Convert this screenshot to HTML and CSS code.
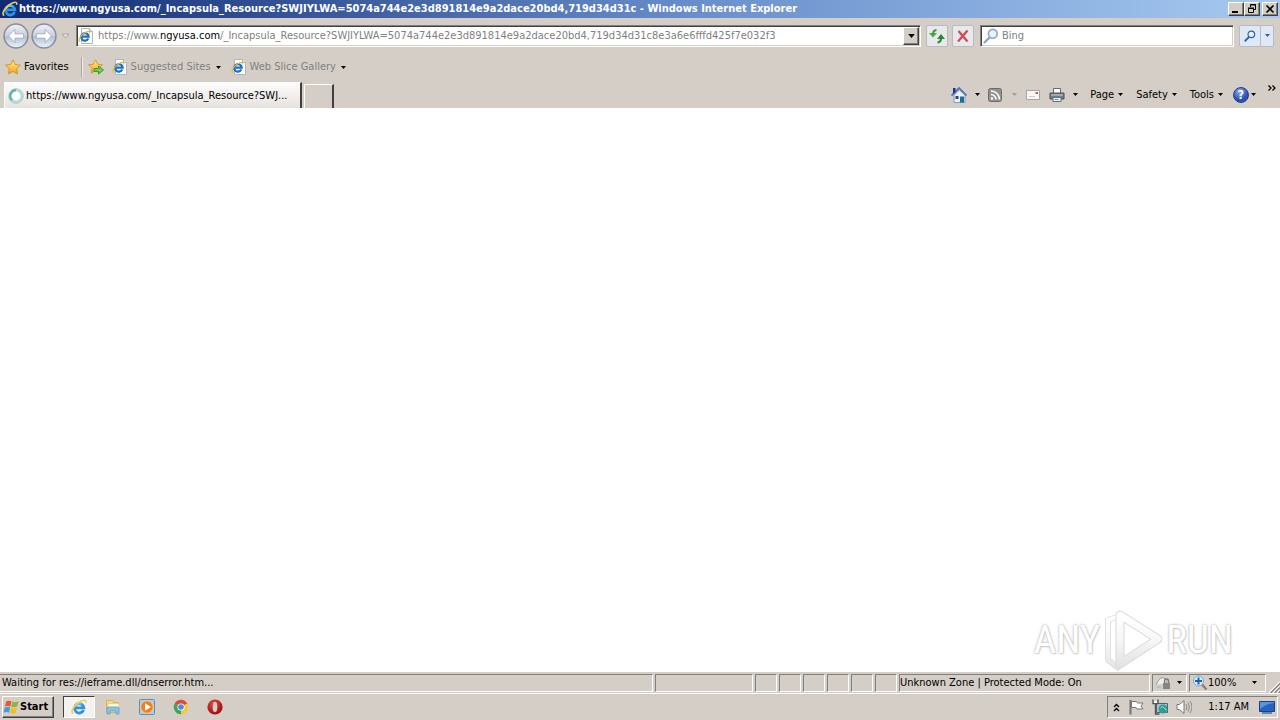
FILE: index.html
```html
<!DOCTYPE html>
<html lang="en">
<head>
<meta charset="utf-8">
<title>Windows Internet Explorer</title>
<link rel="stylesheet" href="styles.css">
</head>
<body>
<svg class="defs" aria-hidden="true">
  <defs>
    <linearGradient id="gold" x1="0" y1="0" x2="0" y2="1"><stop offset="0" stop-color="#fff08e"/><stop offset="1" stop-color="#f5a31a"/></linearGradient>
    <linearGradient id="orb" x1="0" y1="0" x2="0" y2="1"><stop offset="0" stop-color="#eef1f7"/><stop offset=".5" stop-color="#c8d0de"/><stop offset=".52" stop-color="#b3c0d4"/><stop offset="1" stop-color="#eaf5fc"/></linearGradient>
    <radialGradient id="red" cx=".4" cy=".3" r=".8"><stop offset="0" stop-color="#e8483e"/><stop offset="1" stop-color="#8c0808"/></radialGradient>
    <linearGradient id="mark" x1="0" y1="0" x2="0" y2="1"><stop offset="0" stop-color="#fff"/><stop offset=".5" stop-color="#f7f7f7"/><stop offset="1" stop-color="#e4e4e4"/></linearGradient>
  </defs>
  <symbol id="ie" viewBox="0 0 16 16">
    <path d="M12.600 11A4.700 4.700 0 1 1 12.900 8.800H4.500" fill="none" stroke="#2e93e6" stroke-width="2.800"/>
    <path d="M4 7.500Q6 4 10.500 5" fill="none" stroke="#a5defc" stroke-width="1"/>
    <path d="M2.300 14.500C-.8 13.500 2 7.500 7 4S15.500.300 14.700 3.800" fill="none" stroke="#f6cd4c" stroke-width="1.600"/>
  </symbol>
  <symbol id="iepage" viewBox="0 0 16 16">
    <path d="M3.500.500h8l3 3v12h-11z" fill="#fff" stroke="#aab6c3"/>
    <path d="M11.500.500v3h3" fill="#dde8f2" stroke="#aab6c3"/>
    <path d="M10.300 10.600A3.800 3.800 0 1 1 10.700 8.600H4" fill="none" stroke="#1c6fc4" stroke-width="2.200"/>
    <path d="M2 13.600C-.5 12.500 2.500 7.500 6 5.200S12.500 2.500 11.500 5.500" fill="none" stroke="#e8b93a" stroke-width="1.100"/>
  </symbol>
  <symbol id="star" viewBox="0 0 16 16">
    <path d="M8 .8l2.200 4.700 5.200.600-3.800 3.600 1 5.300L8 12.400 3.400 15l1-5.300L.6 6.100l5.200-.6z" fill="url(#gold)" stroke="#d68f1e" stroke-width=".9"/>
  </symbol>
  <symbol id="down" viewBox="0 0 5 3"><path d="M0 0h5L2.500 3z" fill="currentColor"/></symbol>
  <symbol id="lens" viewBox="0 0 16 16">
    <path d="M6.500 9.500L1 15" stroke="currentColor" stroke-width="2.400"/>
    <circle cx="9.800" cy="5.800" r="4.400" fill="#e8f3fd" stroke="currentColor" stroke-width="1.600"/>
    <path d="M7.500 5.500a2.500 2.500 0 0 1 2-2" fill="none" stroke="#fff" stroke-width="1.200"/>
  </symbol>
</svg>

<header class="titlebar">
  <svg class="ico"><use href="#ie"/></svg>
  <h1 class="caption">https://www.ngyusa.com/_Incapsula_Resource?SWJIYLWA=5074a744e2e3d891814e9a2dace20bd4,719d34d31c - Windows Internet Explorer</h1>
  <div class="winbtns">
    <button class="winbtn" aria-label="Minimize"><svg viewBox="0 0 12 10"><path d="M2 8h6" stroke="#000" stroke-width="2"/></svg></button>
    <button class="winbtn" aria-label="Restore"><svg viewBox="0 0 12 10"><path d="M4.500 3V.500h5v5H8M4 1h6M2.500 4.500h5v4h-5zM2 4h6" fill="none" stroke="#000"/></svg></button>
    <button class="winbtn close" aria-label="Close"><svg viewBox="0 0 12 10"><path d="M2.500 1.500l7 7M9.500 1.500l-7 7" stroke="#000" stroke-width="1.700"/></svg></button>
  </div>
</header>

<nav class="navrow" aria-label="Navigation">
  <div class="travel">
    <button class="orb" aria-label="Back"><svg viewBox="0 0 24 24"><circle cx="12" cy="12" r="11" fill="url(#orb)" stroke="#858d99" stroke-width="1.400"/><path d="M5 12l6-6v4h8v4h-8v4z" fill="#fff" stroke="#93a2b8" stroke-width=".7"/></svg></button>
    <button class="orb" aria-label="Forward"><svg viewBox="0 0 24 24"><circle cx="12" cy="12" r="11" fill="url(#orb)" stroke="#858d99" stroke-width="1.400"/><path d="M19 12l-6-6v4H5v4h8v4z" fill="#fff" stroke="#93a2b8" stroke-width=".7"/></svg></button>
    <button class="plain recent" aria-label="Recent pages"><svg viewBox="0 0 9 6"><path d="M1 1h7L4.500 5z" fill="#e7e4df" stroke="#aaa69f"/></svg></button>
  </div>
  <div class="address field">
    <svg class="ico"><use href="#iepage"/></svg>
    <div class="url" role="textbox" aria-label="Address" contenteditable="true" spellcheck="false">https://www.<span class="host">ngyusa.com</span>/_Incapsula_Resource?SWJIYLWA=5074a744e2e3d891814e9a2dace20bd4,719d34d31c8e3a6e6fffd425f7e032f3</div>
    <button class="drop" aria-label="Show address list"><svg class="arrow big"><use href="#down"/></svg></button>
  </div>
  <button class="tool" aria-label="Refresh"><svg viewBox="0 0 16 16"><path d="M7.500 2Q4 2.500 4 6" fill="none" stroke="#3c9a3c" stroke-width="2"/><path d="M0 5h8L4 9.500z" fill="#47a447"/><path d="M8.500 14.500Q12 14 12 10.500" fill="none" stroke="#2c8430" stroke-width="2"/><path d="M8 11h8l-4-5z" fill="#2c8430"/></svg></button>
  <button class="tool stop" aria-label="Stop"><svg viewBox="0 0 16 16"><path d="M3.500 3l9 10.500M12.500 2.500L3 13.500" stroke="#d24b50" stroke-width="2.300"/></svg></button>
  <div class="search field">
    <svg class="ico lens"><use href="#lens"/></svg>
    <input class="query" type="text" placeholder="Bing" aria-label="Search Bing">
  </div>
  <div class="split">
    <button class="tool" aria-label="Search"><svg class="small"><use href="#lens"/></svg></button>
    <button class="tool slim" aria-label="Search options"><svg class="arrow"><use href="#down"/></svg></button>
  </div>
</nav>

<nav class="favrow" aria-label="Favorites bar">
  <button class="plain favs"><svg class="ico"><use href="#star"/></svg>Favorites</button>
  <button class="plain add" aria-label="Add to Favorites bar"><svg class="ico" viewBox="0 0 16 16"><use href="#star" width="15" height="15"/><path d="M6 9.500h4.500V7L15.500 11l-5 4v-2.500H6z" fill="#6fcf48" stroke="#2f8a22" stroke-width=".8"/></svg></button>
  <button class="plain dim"><svg class="ico"><use href="#iepage"/></svg>Suggested Sites<svg class="arrow"><use href="#down"/></svg></button>
  <button class="plain dim"><svg class="ico"><use href="#iepage"/></svg>Web Slice Gallery<svg class="arrow"><use href="#down"/></svg></button>
</nav>

<div class="tabrow">
  <button class="tab"><svg class="ico" viewBox="0 0 16 16"><circle cx="8" cy="8" r="5.800" fill="#fff" stroke="#b8dedd" stroke-width="2.800"/><path d="M8 2.200A5.800 5.800 0 0 0 4 12.200" fill="none" stroke="#5fb3aa" stroke-width="2.200"/><circle cx="8" cy="8" r="7.300" fill="none" stroke="#8fb5b5" stroke-width=".6"/></svg><span class="tabtext">https://www.ngyusa.com/_Incapsula_Resource?SWJ...</span></button>
  <button class="newtab" aria-label="New Tab"></button>
  <div class="commands">
    <button class="plain home" aria-label="Home"><svg class="ico" viewBox="0 0 16 16"><path d="M3 8v7.500h11V8L8.500 3z" fill="#eaf3fc" stroke="#7e9bc4"/><path d="M.5 8.500L8 1l7.500 7.500" fill="none" stroke="#5579b5" stroke-width="1.800"/><path d="M2 1h2.500v4L2 7z" fill="#20308c"/><path d="M9 9.500h4v6H9z" fill="#1f6d96"/><path d="M4.500 9h3v3h-3z" fill="#25456e"/></svg><svg class="arrow"><use href="#down"/></svg></button>
    <button class="plain feed" aria-label="Feeds"><svg class="ico" viewBox="0 0 16 16"><rect x="1.500" y="1.500" width="13" height="13" rx="2" fill="#949290" stroke="#6d6b69"/><circle cx="5" cy="11.500" r="1.300" fill="#fff"/><path d="M4 7.500a5 5 0 0 1 5 5M4 4a8.500 8.500 0 0 1 8.500 8.500" fill="none" stroke="#fff" stroke-width="1.600"/></svg><svg class="arrow"><use href="#down"/></svg></button>
    <button class="plain mail" aria-label="Read mail"><svg class="ico" viewBox="0 0 16 16"><path d="M1.500 3.500h13v9h-13z" fill="#f8f6f5" stroke="#a5a3a3"/><path d="M10.500 5h2.500v2h-2.500z" fill="#d05656"/><path d="M4 9.500h6" stroke="#ccc"/></svg></button>
    <button class="plain print" aria-label="Print"><svg class="ico" viewBox="0 0 16 16"><path d="M4.500 1.500h7v5h-7z" fill="#fff" stroke="#666b72"/><path d="M1 6h14v6H1z" fill="#777d86" stroke="#4a4e55"/><path d="M2 8h12" stroke="#cfd4da"/><path d="M4 10.500h8v4H4z" fill="#eef6fb" stroke="#62707c"/><path d="M5.500 12.500h4" stroke="#4a9bc8"/></svg><svg class="arrow"><use href="#down"/></svg></button>
    <button class="plain">Page<svg class="arrow"><use href="#down"/></svg></button>
    <button class="plain">Safety<svg class="arrow"><use href="#down"/></svg></button>
    <button class="plain">Tools<svg class="arrow"><use href="#down"/></svg></button>
    <button class="plain help" aria-label="Help"><span class="q">?</span><svg class="arrow"><use href="#down"/></svg></button>
    <button class="plain more" aria-label="More commands"><svg viewBox="0 0 8 6"><path d="M.5.500L3 3 .5 5.500M4.500.500L7 3 4.500 5.500" fill="none" stroke="#000" stroke-width="1.300"/></svg></button>
  </div>
</div>

<main class="page">
  <div class="watermark"><span>ANY</span><svg viewBox="0 0 60 64"><g fill="none" stroke-linejoin="round"><path d="M5 12l9-3M5 10v42l12 9" stroke="#e0e0e0" stroke-width="6"/><path d="M5 12l9-3M5 10v42l12 9" stroke="url(#mark)" stroke-width="4"/><path d="M17 7l38 24-38 25z" stroke="#d8d8d8" stroke-width="9"/><path d="M17 7l38 24-38 25z" stroke="url(#mark)" stroke-width="7"/></g></svg><span>RUN</span></div>
</main>

<footer class="statusbar">
  <div class="pane message">Waiting for res://ieframe.dll/dnserror.htm...</div>
  <div class="pane progress"></div>
  <div class="pane slot"></div><div class="pane slot"></div><div class="pane slot"></div><div class="pane slot"></div><div class="pane slot"></div><div class="pane slot"></div>
  <div class="pane zone">Unknown Zone | Protected Mode: On</div>
  <button class="pane filter" aria-label="InPrivate Filtering"><svg class="ico" viewBox="0 0 16 16"><path d="M1 10Q5 1 9 3T11 8" fill="#eee" stroke="#9b9b9b"/><path d="M9.500 8V6a2 2 0 0 1 4 0v2" fill="none" stroke="#777" stroke-width="1.300"/><path d="M8 8h7v6H8z" fill="#858585"/><path d="M2 12h4" stroke="#aaa"/></svg><svg class="arrow"><use href="#down"/></svg></button>
  <button class="pane zoom"><svg class="ico" viewBox="0 0 16 16"><path d="M10 9.500l4.500 5" stroke="#9b7a55" stroke-width="2.400"/><circle cx="6.500" cy="6" r="5" fill="#d8ecfb" stroke="#7aa6d6"/><path d="M6.500 2.500v7M3 6h7" stroke="#1c5fb8" stroke-width="2"/></svg><span>100%</span><svg class="arrow"><use href="#down"/></svg></button>
  <svg class="grip" viewBox="0 0 12 12"><path d="M1 12L12 1M5 12l7-7M9 12l3-3" stroke="#fff" stroke-width="1.500"/><path d="M2 12.500l11-11M6 12.500l7-7M10 12.500l3-3" stroke="#85817a" stroke-width="1.300"/></svg>
</footer>

<div class="taskbar">
  <button class="start"><svg class="flag" viewBox="0 0 18 16"><path d="M3.500 2Q6 .8 9 2L7.800 7.500Q5 6.300 2 7.500z" fill="#e9592a"/><path d="M10 2.300Q13 3.600 16.500 2L15 7.600Q12 9 8.800 7.800z" fill="#86b93c"/><path d="M1.800 8.500Q5 7.300 7.600 8.500L6.300 14Q3.500 12.800.5 14z" fill="#3f9adf"/><path d="M8.600 8.900Q12 10.200 14.800 8.700L13.500 14.300Q10 15.600 7.200 14.400z" fill="#f5bc25"/></svg>Start</button>
  <button class="task active" aria-label="Internet Explorer"><svg class="ico"><use href="#ie"/></svg></button>
  <button class="task" aria-label="Windows Explorer"><svg class="ico" viewBox="0 0 16 16"><path d="M1.500 1.500h6l1 2h5v10h-12z" fill="#f4d98a" stroke="#d6b256"/><path d="M3 4.500h11v4H3z" fill="#fff7d2" stroke="#e0c67a" stroke-width=".7"/><path d="M2 15V9.500Q2 8 3.500 8h9Q14 8 14 9.500V15h-3v-3H5v3z" fill="#84c3ea" stroke="#5799c4" stroke-width=".7"/></svg></button>
  <button class="task" aria-label="Media Player"><svg class="ico" viewBox="0 0 16 16"><rect x=".5" y=".5" width="15" height="15" rx="1" fill="#a5cdef" stroke="#5c8fbf"/><circle cx="8" cy="8" r="6.300" fill="#f08119" stroke="#fbd298"/><path d="M6 4.200L12 8l-6 3.800z" fill="#fff"/></svg></button>
  <button class="task" aria-label="Chrome"><svg class="ico" viewBox="0 0 16 16"><path d="M8 8L1.700 4.400A7.200 7.200 0 0 1 14.300 4.500z" fill="#dc4a3c"/><path d="M8 8l6.300-3.500A7.200 7.200 0 0 1 8 15.200z" fill="#f7c934"/><path d="M8 8v7.200A7.200 7.200 0 0 1 1.700 4.400z" fill="#3ea558"/><circle cx="8" cy="8" r="3.600" fill="#fff"/><circle cx="8" cy="8" r="2.800" fill="#4a87e8"/></svg></button>
  <button class="task" aria-label="Opera"><svg class="ico" viewBox="0 0 16 16"><circle cx="8" cy="8" r="7.600" fill="url(#red)"/><ellipse cx="8" cy="8" rx="2.300" ry="5.200" fill="#d8cfca"/></svg></button>
  <div class="tray">
    <button class="plain" aria-label="Show hidden icons"><svg class="chev" viewBox="0 0 7 9"><path d="M1 4l2.500-2.500L6 4M1 8l2.500-2.500L6 8" fill="none" stroke="#000" stroke-width="1.400"/></svg></button>
    <svg class="ico" viewBox="0 0 16 16"><path d="M2.500 1v14.500" stroke="#727272" stroke-width="2"/><path d="M3.500 2.500h5l1 1.500h5.500l-2 3 2 3H9L8 8.500H3.500z" fill="#fff" stroke="#777"/></svg>
    <svg class="ico" viewBox="0 0 16 16"><path d="M4.500 4.500h11v9h-11z" fill="#a8c5cf" stroke="#53646c"/><circle cx="11" cy="10" r="4.500" fill="#2f9b95"/><path d="M8.500 9q2-3 4 0t2 2" stroke="#a8e5df" fill="none"/><path d="M1 .500v4h5v-4M3.500 4v11h4" fill="none" stroke="#555" stroke-width="1.400"/><path d="M2 2h3v2H2z" fill="#fff"/></svg>
    <svg class="ico" viewBox="0 0 16 16"><path d="M1 5.500h2.500L8 1.500v13l-4.500-4H1z" fill="#fff" stroke="#777"/><path d="M10 5q2 3 0 6M12 3.500q3 4.500 0 9M14 2q4 6 0 12" fill="none" stroke="#8b8b8b"/></svg>
    <time class="clock">1:17 AM</time>
    <svg class="ico" viewBox="0 0 16 16"><path d="M.5 2.500h15v10H.5z" fill="#2563be" stroke="#1c3f83"/><path d="M1 3h14v1Q7 5 1 10z" fill="#5797e0"/><path d="M3 14h10" stroke="#3b6cab" stroke-width="1.500"/></svg>
  </div>
</div>
</body>
</html>
```
FILE: styles.css
```css
* { box-sizing: border-box; }
body {
  margin: 0;
  height: 100vh;
  display: flex;
  flex-direction: column;
  overflow: hidden;
  background: #d5cec7;
  color: #000;
  font: 11px/14px "DejaVu Sans Condensed", "Liberation Sans", sans-serif;
}
button, input { font: inherit; color: inherit; margin: 0; padding: 0; border: 0; border-radius: 0; background: none; }
svg { display: block; flex: none; }
.defs { position: absolute; width: 0; height: 0; }
.ico { width: 16px; height: 16px; }
.arrow { width: 5px; height: 3px; }
.arrow.big { width: 7px; height: 4px; }
.plain { display: flex; align-items: center; white-space: nowrap; }

.titlebar {
  display: flex;
  align-items: center;
  gap: 1px;
  height: 18px;
  flex: none;
  padding: 0 2px;
  color: #fff;
  background: linear-gradient(90deg, #0f2a72, #6a8fcc 55%, #a6caf0);
}
.caption { margin: 0; flex: 1; min-width: 0; overflow: hidden; font-size: 11px; font-weight: bold; white-space: nowrap; }
.winbtns { display: flex; }
.winbtn {
  width: 16px;
  height: 14px;
  display: grid;
  place-items: center;
  background: #d5cec7;
  border: 1px solid;
  border-color: #fff #404040 #404040 #fff;
  box-shadow: inset -1px -1px #808080;
}
.winbtn svg { width: 12px; height: 10px; }
.winbtn.close { margin-left: 2px; }

.navrow { display: flex; align-items: center; height: 35px; flex: none; padding: 0 6px 0 3px; }
.travel { display: flex; align-items: center; margin-right: 5px; }
.orb { width: 26px; height: 26px; margin-right: 2px; border-radius: 13px; }
.orb svg { width: 26px; height: 26px; }
.recent { width: 12px; justify-content: center; }
.recent svg { width: 9px; height: 6px; }
.field {
  display: flex;
  align-items: center;
  height: 22px;
  background: #fff;
  border: 1px solid;
  border-color: #808080 #fff #fff #808080;
  box-shadow: inset 1px 1px #404040, inset -1px -1px #d5cec7;
}
.address { flex: 1; min-width: 0; padding: 2px 1px 2px 1px; }
.url { flex: 1; min-width: 0; margin-left: 4px; overflow: hidden; white-space: nowrap; color: #808080; outline: 0; }
.host { color: #000; }
.drop {
  width: 16px;
  height: 18px;
  display: grid;
  place-items: center;
  background: #d5cec7;
  border: 1px solid;
  border-color: #fff #404040 #404040 #fff;
  box-shadow: inset -1px -1px #808080;
}
.tool {
  width: 22px;
  height: 22px;
  display: grid;
  place-items: center;
  margin-left: 5px;
  background: #e8e9eb;
  border: 1px solid #b6bcc6;
  border-radius: 2px;
}
.tool svg { width: 16px; height: 16px; }
.tool .small { width: 12px; height: 12px; }
.stop { margin-left: 4px; }
.search { width: 254px; margin-left: 6px; padding: 2px; }
.lens { color: #8fa6c4; }
.query { flex: 1; min-width: 0; margin-left: 3px; outline: 0; }
.query::placeholder { color: #808080; opacity: 1; }
.split { display: flex; color: #2b5fb4; }
.split .tool { background: #dfe8f5; }
.split .slim { width: 14px; margin-left: -1px; }
.split .slim svg { width: 5px; height: 3px; }

.favrow { display: flex; align-items: center; height: 28px; flex: none; padding: 0 5px; }
.favs { gap: 3px; padding-right: 12px; height: 20px; border-right: 1px solid #aaa49d; box-shadow: 1px 0 #f0edea; }
.add { margin: 0 8px 0 6px; }
.dim { gap: 3px; margin-right: 10px; color: #808080; }
.dim .arrow { margin-left: 2px; color: #000; }

.tabrow { display: flex; align-items: flex-end; height: 27px; flex: none; padding-left: 4px; }
.tab {
  display: flex;
  align-items: center;
  gap: 2px;
  width: 298px;
  height: 26px;
  padding: 0 3px;
  background: linear-gradient(#fdfcfc, #e6e2de);
  border: solid;
  border-width: 1px 2px 0 1px;
  border-color: #fff #404040 #fff #fff;
}
.tabtext { white-space: nowrap; }
.newtab { width: 30px; height: 24px; margin-left: 2px; border: solid; border-width: 1px 2px 0 1px; border-color: #fff #404040 #fff #fff; }
.commands { flex: 1; display: flex; align-items: center; justify-content: flex-end; height: 27px; padding-right: 4px; }
.commands .plain { gap: 4px; margin-left: 13px; }
.commands .home { gap: 8px; margin-left: 0; }
.commands .feed { gap: 9px; margin-left: 7px; }
.feed .arrow { color: #a39d99; }
.commands .mail { margin-left: 8px; }
.commands .print { gap: 8px; margin-left: 8px; margin-right: -1px; }
.commands .help { gap: 2px; margin-left: 10px; }
.q {
  width: 16px;
  height: 16px;
  border: 1px solid #1c3f8c;
  border-radius: 8px;
  background: radial-gradient(circle at 40% 25%, #8fb0ee, #2b50b4 60%);
  color: #fff;
  font-size: 12px;
  font-weight: bold;
  text-align: center;
}
.commands .more { align-self: flex-start; margin: 4px 0 0 12px; }
.more svg { width: 8px; height: 6px; }

.page { flex: 1; min-height: 0; position: relative; background: #fff; }
.watermark {
  position: absolute;
  right: 47px;
  bottom: 0;
  display: flex;
  align-items: center;
  gap: 3px;
  color: #fff;
  font: 39px/48px "Roboto Condensed", "DejaVu Sans Condensed", sans-serif;
  text-shadow: 0 0 2px #bbb, 0 0 3px #ccc, 1px 1px 1px #ddd;
}
.watermark svg { width: 60px; height: 64px; }

.statusbar { display: flex; align-items: center; gap: 2px; height: 21px; flex: none; }
.pane {
  height: 18px;
  display: flex;
  align-items: center;
  border: 1px solid;
  border-color: #808080 #fff #fff #808080;
  white-space: nowrap;
}
.message { flex: 1; min-width: 0; padding-left: 2px; border-left: 0; overflow: hidden; }
.progress { width: 98px; }
.slot { width: 22px; }
.zone { width: 251px; }
.filter { width: 35px; gap: 6px; padding-left: 2px; }
.zoom { width: 77px; gap: 0; padding-left: 2px; }
.zoom span { flex: 1; text-align: left; }
.zoom .arrow { margin-right: 8px; }
.grip { width: 12px; height: 12px; align-self: flex-end; }

.taskbar { display: flex; align-items: center; height: 27px; flex: none; padding: 0 2px; border-top: 1px solid #fff; }
.start {
  display: flex;
  align-items: center;
  width: 52px;
  height: 22px;
  font-weight: bold;
  border: 1px solid;
  border-color: #fff #404040 #404040 #fff;
  box-shadow: inset -1px -1px #808080;
}
.flag { width: 17px; height: 16px; }
.task { width: 32px; height: 22px; margin-right: 2px; display: grid; place-items: center; }
.task.active { margin-left: 9px; background: #f4f2f0; border: 1px solid; border-color: #404040 #fff #fff #404040; }
.tray {
  display: flex;
  align-items: center;
  gap: 8px;
  height: 22px;
  margin-left: auto;
  padding: 0 2px 0 5px;
  border: 1px solid;
  border-color: #808080 #fff #fff #808080;
}
.chev { width: 7px; height: 9px; }
.clock { margin: 0 2px 0 8px; }
```
